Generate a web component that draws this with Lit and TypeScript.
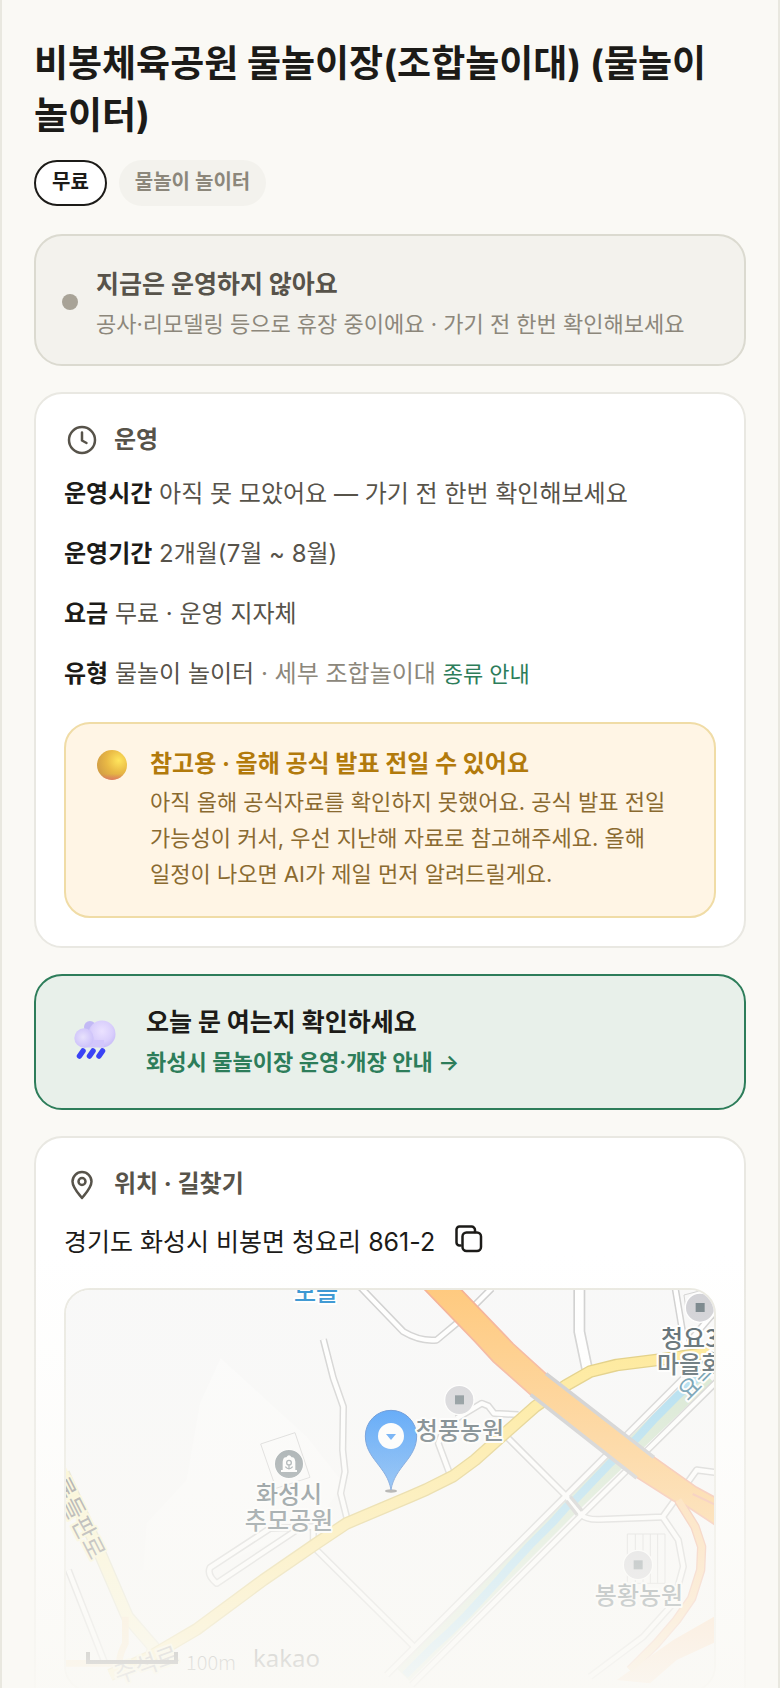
import { LitElement, html, svg, css } from "lit"
import { customElement } from "lit/decorators.js"

const mainRoad = "M180,1215 L300,1160 L440,1078 L640,930 L800,820 L890,760 L1080,680 L1130,658 L1210,618 L1275,570 L1365,490 L1455,410 L1550,345 L1620,305 L1700,285 L1820,270 L2000,245"
const sideStreet = "M40,610 L150,850 L232,1040 L310,1130 L300,1200"
const ramp = "M1885,690 L1935,770 L1955,830 L1952,900 L1925,985 L1880,1050 L1820,1120 L1740,1200"

const minorRoads = [
	"M820,208 L850,325 L880,410 L878,540 L885,605 L872,670 L892,750",
	"M930,50 L1060,185 Q1110,215 1160,210 L1220,160 L1325,55",
	"M1875,50 L1905,230",
	"M1905,230 L1990,130",
	"M1220,445 L1295,400 L1315,408 L1332,430 L1405,434",
	"M1180,480 L1165,520 L1198,608",
	"M1370,500 L1548,678 L1595,735 Q1610,750 1650,748 L1838,741 L1940,600 L2000,608",
	"M1838,741 L1885,810 L1900,890 L1870,1000 L1780,1100 L1620,1220",
	"M1900,325 L1545,680 L1010,1215",
	"M2000,335 L1595,735 L1085,1245",
	"M800,840 L1090,1128",
	"M740,780 L500,940 Q470,915 480,893 L660,775 L790,770 L790,820",
	"M55,900 L165,1180",
]

@customElement("park-map")
export class ParkMap extends LitElement {
	static styles = css`
:host {
  display: block;
}

svg {
  display: block;
  width: 100%;
  height: auto;
}

text {
  font-family: "Noto Sans CJK KR", sans-serif;
  font-size: 24px;
  font-weight: 500;
  fill: #4a5b63;
  stroke: #fff;
  stroke-width: 4px;
  stroke-linejoin: round;
  paint-order: stroke;
  text-anchor: middle;
}

.station {
  fill: #2d90d0;
}

.start {
  text-anchor: start;
}

.river-name {
  font-weight: 400;
  fill: #4d87a0;
}

.street {
  font-weight: 400;
  fill: #777;
  stroke: #fbf5c8;
}

.scale {
  font-size: 20px;
  font-weight: 300;
  fill: #333;
  stroke: none;
}

.brand {
  font-family: "Noto Sans", sans-serif;
  font-weight: 400;
  fill: #333;
  stroke: none;
}

.casing, .surface, .line {
  fill: none;
  stroke-linejoin: round;
}

.casing {
  stroke: #cdcdcd;
  stroke-width: 22;
}

.surface {
  stroke: #fff;
  stroke-width: 13;
}

.line {
  stroke: #d0d0d0;
  stroke-width: 3;
}
`

	render() {
		return html`
			<svg viewBox="0 0 648 400" role="img" aria-label="지도">
				<defs>
					<linearGradient id="pin" x1="0" y1="0" x2="0" y2="1">
						<stop offset="0" stop-color="#1f87f9"/>
						<stop offset="1" stop-color="#3c95f5"/>
					</linearGradient>
				</defs>
				<rect width="648" height="400" fill="#f8f8f8"/>
				<g transform="translate(-16 -20) scale(0.33333)">
					${this.drawRoads()}
					${this.drawPlaces()}
				</g>
				${this.drawLabels()}
			</svg>
		`
	}

	drawRoads() {
		return svg`
			<path d="M512,265 L770,500 L880,640 L800,760 L470,900 L280,900 L290,760 L410,630 L450,400 Z" fill="#fbfbfb"/>
			<path class="line" d="M632,522 L735,488 L780,622 L678,655 Z"/>
			<path class="line" d="M1732,792 H1845 V940 H1732 Z M1756,792 V940 M1779,792 V940 M1801,792 V940 M1823,792 V940"/>
			<path class="line" d="M1902,75 L1960,60 M1902,75 L1908,120"/>
			<path d="M1970,315 L1565,705 L1060,1215" fill="none" stroke="#d1e4cc" stroke-width="52"/>
			<path d="M1970,300 L1885,375 L1815,445 L1760,505 L1680,580 L1575,690 L1550,710 L1510,755 L1440,825 L1380,890 L1350,925 L1305,975 L1250,1035 L1200,1085 L1150,1130 L1065,1215" fill="none" stroke="#a1d8ef" stroke-width="24"/>
			<path d="M1588,60 V185 L1612,300" fill="none" stroke="#cdcdcd" stroke-width="36"/>
			${minorRoads.map(d => svg`<path class="casing" d=${d}/>`)}
			${minorRoads.map(d => svg`<path class="surface" d=${d}/>`)}
			<path d="M1588,50 V185 L1612,300" fill="none" stroke="#fff" stroke-width="26"/>
			<path d="M1549,693 L1581,734 M1561,680 L1596,722" fill="none" stroke="#c2c2c2" stroke-width="10"/>
			<path d=${sideStreet} fill="none" stroke="#dedcc0" stroke-width="40" stroke-linejoin="round"/>
			<path d=${sideStreet} fill="none" stroke="#fbf3c0" stroke-width="32" stroke-linejoin="round"/>
			<path d="M226,1040 V1120 Q205,1160 210,1180 H40" fill="none" stroke="#fbdfb0" stroke-width="20"/>
			<path d=${mainRoad} fill="none" stroke="#ddc66c" stroke-width="38" stroke-linejoin="round"/>
			<path d=${mainRoad} fill="none" stroke="#ffe688" stroke-width="30" stroke-linejoin="round"/>
			<path d=${ramp} fill="none" stroke="#f0ab8c" stroke-width="28" stroke-linejoin="round"/>
			<path d="M2010,1030 L1870,1110 L1700,1230 L1800,1240 L1880,1170 L2010,1110 Z" fill="#ffcfa4"/>
			<path d="M1125,60 L1275,215 L1330,275 L1445,377 L1760,622 L1870,692 L1905,705 L2010,775 L2010,690 L1940,652 L1810,560 L1490,313 L1390,222 L1225,50 L1115,50 Z" fill="#ffc676" stroke="#f4ab8f" stroke-width="5"/>
			<path d=${ramp} fill="none" stroke="#ffcf92" stroke-width="20" stroke-linejoin="round"/>
			<path d="M1928,672 L2000,706" fill="none" stroke="#f4ab8f" stroke-width="6"/>
			<path d="M1442,374 L1760,624 M1488,311 L1812,562" fill="none" stroke="#c4c4c6" stroke-width="11"/>
		`
	}

	drawPlaces() {
		return svg`
			${[[1228, 390], [1950, 113], [1764, 885]].map(([x, y]) => svg`
				<circle cx=${x} cy=${y} r="44" fill="#cfcfd4" stroke="#fff" stroke-width="4"/>
				<rect x=${x - 13} y=${y - 14} width="27" height="27" fill="#6f7d83"/>
			`)}
			<circle cx="717" cy="582" r="44" fill="#7d898e" stroke="#fff" stroke-width="4"/>
			<path d="M693,606 V600 H698 V575 Q700,560 709,562 Q717,550 725,562 Q734,560 736,575 V600 H741 V606 Z" fill="#fff"/>
			<g fill="none" stroke="#7d898e" stroke-width="4">
				<circle cx="717" cy="578" r="7"/>
				<path d="M706,590 Q717,603 728,590 M717,586 V598"/>
			</g>
			<ellipse cx="1023" cy="663" rx="18" ry="5" fill="#777"/>
			<path d="M1023,660 C1012,590 946,566 946,498 A77,77 0 0 1 1100,498 C1100,566 1034,590 1023,660 Z" fill="url(#pin)" stroke="#2b6fcc" stroke-width="3"/>
			<circle cx="1023" cy="498" r="39" fill="#fff"/>
			<path d="M1008,492 H1038 L1023,510 Z" fill="#2d8cf6"/>
		`
	}

	drawLabels() {
		return svg`
			<text class="station" x="250" y="11">모을</text>
			<text x="223" y="213">화성시</text>
			<text x="223" y="239">추모공원</text>
			<text x="394" y="149">청풍농원</text>
			<text x="573" y="314">봉황농원</text>
			<text class="start river-name" transform="translate(622 112) rotate(-45)">요곡천</text>
			<text class="start" x="595" y="57">청요3리</text>
			<text class="start" x="591" y="83">마을회관</text>
			<text class="street" transform="translate(0 222) rotate(63)">구룡들판로</text>
			<text class="start street" transform="translate(52 394) rotate(-20)">주석로</text>
			<path d="M22,362 V372 H110 V362" fill="none" stroke="#222" stroke-width="4"/>
			<text class="start scale" x="120" y="380">100m</text>
			<text class="start brand" x="187" y="377">kakao</text>
		`
	}
}

@customElement("app-root")
export class AppRoot extends LitElement {
	static styles = css`
:host {
  display: block;
  font-family: Inter, "Noto Sans CJK KR", sans-serif;
  font-size: 24px;
  line-height: 36px;
  color: #1c1b18;
  word-break: keep-all;
}

.page {
  position: relative;
  overflow: hidden;
  box-sizing: border-box;
  min-height: 100vh;
  padding: 38px 32px 0;
  border: 2px solid #e9e8e0;
  border-width: 0 2px;
  background: #faf9f5;
}

.fade {
  position: absolute;
  inset: auto 0 0;
  height: 468px;
  pointer-events: none;
  background: linear-gradient(rgba(250, 249, 245, 0), #faf9f5);
}

h1, h2, p {
  margin: 0;
}

h1 {
  font-size: 37px;
  line-height: 52px;
  font-weight: 700;
}

h2 {
  font-size: 24px;
  line-height: 36px;
  font-weight: 700;
}

a {
  color: #2d7d5a;
  text-decoration: none;
}

.chips {
  display: flex;
  gap: 12px;
  margin: 18px 0 28px;
}

.chip {
  padding: 7px 16px 9px;
  border-radius: 24px;
  background: #f3f2ed;
  color: #8c877b;
  font-size: 20px;
  line-height: 30px;
  font-weight: 600;
}

.chip.free {
  padding: 5px 16px 7px;
  border: 2px solid #1c1b18;
  background: #fff;
  color: #1c1b18;
}

.stack {
  display: flex;
  flex-direction: column;
  gap: 26px;
}

.card {
  padding: 28px;
  border: 2px solid #e9e8e2;
  border-radius: 28px;
  background: #fff;
}

.status {
  display: flex;
  align-items: center;
  gap: 18px;
  padding: 26px 26px 22px;
  border-color: #dbdad0;
  background: #f3f2ed;
}

.message {
  padding-top: 4px;
}

.dot {
  width: 16px;
  height: 16px;
  border-radius: 50%;
  background: #a8a397;
}

.status h2, .check h2 {
  font-size: 25px;
  margin-bottom: 4px;
}

.status h2, .heading h2 {
  color: #57534a;
}

.status p {
  color: #8c877b;
}

.small {
  font-size: 22px;
}

.heading {
  display: flex;
  align-items: center;
  gap: 14px;
  color: #57534a;
}

.heading svg {
  width: 36px;
  height: 36px;
}

.stroke {
  fill: none;
  stroke: currentColor;
  stroke-width: 2.5;
  stroke-linecap: round;
  stroke-linejoin: round;
}

.rows {
  display: flex;
  flex-direction: column;
  gap: 24px;
  margin: 18px 0 30px;
  color: #57534a;
}

.rows strong {
  color: #1c1b18;
}

.muted {
  color: #8c877b;
}

.rows a {
  font-size: 22px;
}

.note {
  display: flex;
  gap: 16px;
  padding: 22px 28px 24px;
  border: 2px solid #f0dca6;
  border-radius: 26px;
  background: #fff5e5;
  color: #8a6a30;
}

.note h2 {
  color: #b27a0c;
  margin-bottom: 2px;
}

.note svg {
  flex: none;
  width: 40px;
  height: 40px;
}

.check {
  display: flex;
  align-items: center;
  gap: 26px;
  border-color: #2d7d5a;
  background: #e8f0ea;
}

.check svg {
  flex: none;
  width: 56px;
  height: 56px;
}

.check h2 {
  color: #1c1b18;
}

.check p {
  font-weight: 600;
}

.address {
  display: flex;
  align-items: center;
  gap: 16px;
  margin: 22px 0 28px;
  font-size: 25px;
}

button {
  padding: 0;
  border: 0;
  background: transparent;
  color: inherit;
}

button svg {
  display: block;
  width: 36px;
  height: 36px;
}

.map {
  overflow: hidden;
  border: 2px solid #e9e8e0;
  border-radius: 26px;
}
`

	render() {
		return html`
			<main class="page">
				<h1>비봉체육공원 물놀이장(조합놀이대) (물놀이 놀이터)</h1>
				<div class="chips">
					<span class="chip free">무료</span>
					<span class="chip">물놀이 놀이터</span>
				</div>
				<div class="stack">
					<section class="card status">
						<span class="dot"></span>
						<div class="message">
							<h2>지금은 운영하지 않아요</h2>
							<p class="small">공사·리모델링 등으로 휴장 중이에요 · 가기 전 한번 확인해보세요</p>
						</div>
					</section>
					${this.createHours()}
					${this.createCheck()}
					${this.createLocation()}
				</div>
				<div class="fade"></div>
			</main>
		`
	}

	createHours() {
		return html`
			<section class="card">
				<div class="heading">
					<svg class="stroke" viewBox="0 0 36 36"><circle cx="18" cy="18" r="13"/><path d="M18,10.5 V18.5 L22.5,21"/></svg>
					<h2>운영</h2>
				</div>
				<div class="rows">
					<p><strong>운영시간</strong> 아직 못 모았어요 — 가기 전 한번 확인해보세요</p>
					<p><strong>운영기간</strong> 2개월(7월 ~ 8월)</p>
					<p><strong>요금</strong> 무료 · 운영 지자체</p>
					<p><strong>유형</strong> 물놀이 놀이터 <span class="muted">· 세부 조합놀이대</span> <a href="#types">종류 안내</a></p>
				</div>
				<div class="note">
					<svg viewBox="0 0 40 40">
						<defs>
							<radialGradient id="ball" cx="0.72" cy="0.35" r="0.8">
								<stop offset="0" stop-color="#ffe55c"/>
								<stop offset="0.5" stop-color="#e9b945"/>
								<stop offset="1" stop-color="#cf9a44"/>
							</radialGradient>
							<linearGradient id="ball-base" x1="0" y1="0" x2="0" y2="1">
								<stop offset="0.8" stop-color="#e0706a" stop-opacity="0"/>
								<stop offset="1" stop-color="#e0706a" stop-opacity="0.8"/>
							</linearGradient>
						</defs>
						<circle cx="18" cy="19" r="15" fill="url(#ball)"/>
						<circle cx="18" cy="19" r="15" fill="url(#ball-base)"/>
					</svg>
					<div>
						<h2>참고용 · 올해 공식 발표 전일 수 있어요</h2>
						<p class="small">아직 올해 공식자료를 확인하지 못했어요. 공식 발표 전일 가능성이 커서, 우선 지난해 자료로 참고해주세요. 올해 일정이 나오면 AI가 제일 먼저 알려드릴게요.</p>
					</div>
				</div>
			</section>
		`
	}

	createCheck() {
		return html`
			<a class="card check" href="#notice">
				<svg viewBox="0 0 56 56">
					<defs>
						<radialGradient id="puff" cx="0.5" cy="0.4" r="0.65">
							<stop offset="0" stop-color="#ebe2ff"/>
							<stop offset="0.6" stop-color="#dacffc"/>
							<stop offset="1" stop-color="#c3b7f7"/>
						</radialGradient>
						<radialGradient id="puff-small" cx="0.45" cy="0.45" r="0.6">
							<stop offset="0" stop-color="#e8e2fc"/>
							<stop offset="1" stop-color="#cbbffa"/>
						</radialGradient>
					</defs>
					<circle cx="26" cy="13" r="6" fill="#c2b9f5"/>
					<path d="M20,16 H42 V33 H20 Z" fill="#d2c6fb"/>
					<circle cx="38" cy="20" r="13.5" fill="url(#puff)"/>
					<path d="M20,26 H40 V33.5 H20 Z" fill="#d2c6fb"/>
					<circle cx="20" cy="24" r="9.7" fill="url(#puff-small)"/>
					<path d="M19,37 L15.5,42 M29,37 L25.5,42 M38.5,37 L35,42" fill="none" stroke="#3a43f5" stroke-width="5.5" stroke-linecap="round"/>
				</svg>
				<div>
					<h2>오늘 문 여는지 확인하세요</h2>
					<p class="small">화성시 물놀이장 운영·개장 안내 →</p>
				</div>
			</a>
		`
	}

	createLocation() {
		return html`
			<section class="card">
				<div class="heading">
					<svg class="stroke" viewBox="0 0 36 36"><path d="M18,32 C14,27 8.5,21.5 8.5,15.5 A9.5,9.5 0 0 1 27.5,15.5 C27.5,21.5 22,27 18,32 Z"/><circle cx="18" cy="15.5" r="3.5"/></svg>
					<h2>위치 · 길찾기</h2>
				</div>
				<div class="address">
					<span>경기도 화성시 비봉면 청요리 861-2</span>
					<button aria-label="주소 복사">
						<svg class="stroke" viewBox="0 0 36 36"><rect x="11.5" y="8.5" width="18.5" height="18.5" rx="4"/><path d="M9.5,21.5 H8.5 A3,3 0 0 1 5.5,18.5 V5.5 A3,3 0 0 1 8.5,2.5 H20.5 A3.5,3.5 0 0 1 24,6 V8"/></svg>
					</button>
				</div>
				<div class="map"><park-map></park-map></div>
			</section>
		`
	}
}
